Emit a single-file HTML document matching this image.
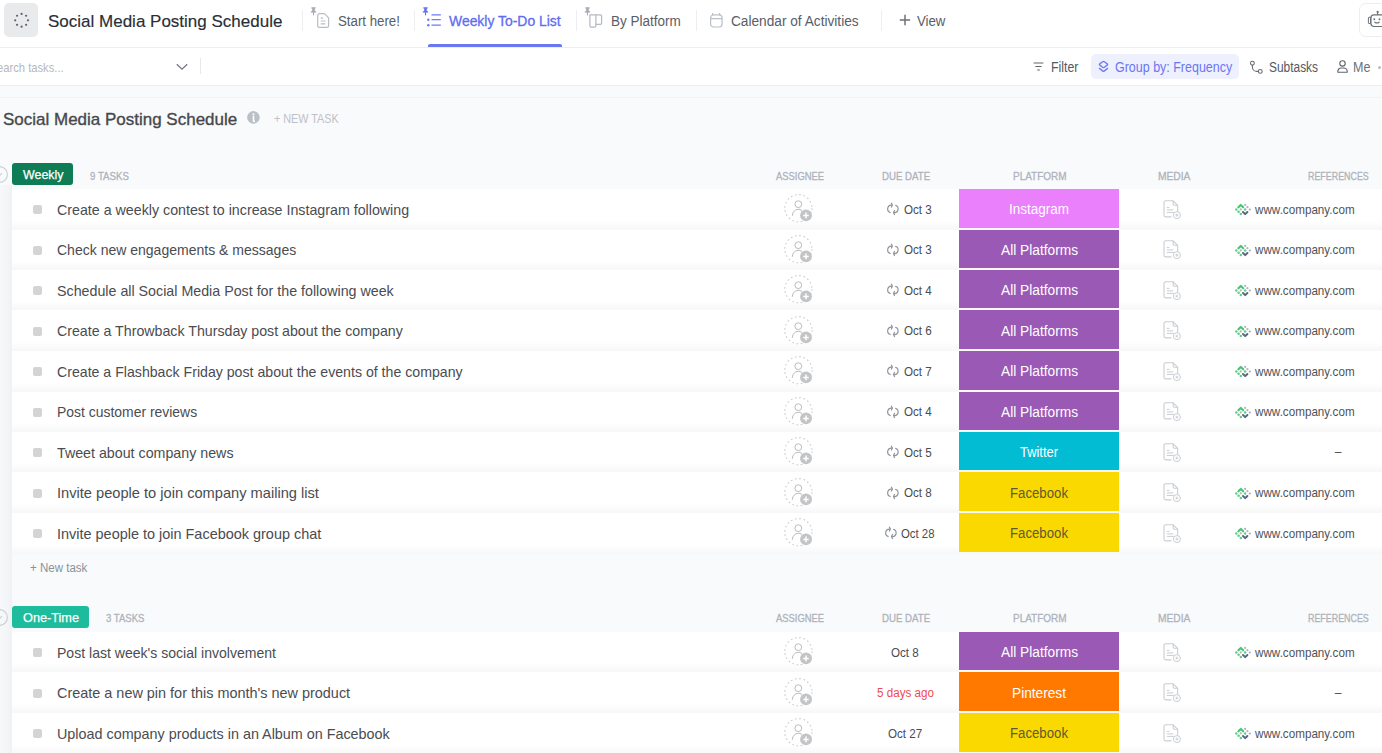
<!DOCTYPE html><html><head><meta charset="utf-8"><style>
*{margin:0;padding:0;box-sizing:border-box}
html,body{width:1382px;height:753px;overflow:hidden;background:#f9fafb;font-family:"Liberation Sans", sans-serif;position:relative}
.a{position:absolute}
.t{position:absolute;white-space:nowrap;line-height:1;font-family:"Liberation Sans", sans-serif}
svg{position:absolute;overflow:visible}
</style></head><body><div class="a" style="left:0;top:0;width:1382px;height:47px;background:#fff"></div>
<div class="a" style="left:0;top:47px;width:1382px;height:1px;background:#eceef1"></div>
<div class="a" style="left:4px;top:3px;width:34px;height:34px;border-radius:5px;background:#e9eaec"></div>
<svg class="a" style="left:0;top:0" width="40" height="40"><circle cx="21.60" cy="13.90" r="1.1" fill="#5f636a"/><circle cx="26.13" cy="15.77" r="1.1" fill="#5f636a"/><circle cx="28.00" cy="20.30" r="1.1" fill="#5f636a"/><circle cx="26.13" cy="24.83" r="1.1" fill="#5f636a"/><circle cx="21.60" cy="26.70" r="1.1" fill="#5f636a"/><circle cx="17.07" cy="24.83" r="1.1" fill="#5f636a"/><circle cx="15.20" cy="20.30" r="1.1" fill="#5f636a"/><circle cx="17.07" cy="15.77" r="1.1" fill="#5f636a"/></svg>
<div class="t" style="left:47.60px;top:13.00px;font-size:17px;color:#2a2e35;font-weight:normal;transform:scaleX(1.0002);transform-origin:0 0;-webkit-text-stroke:0.15px #2a2e35">Social Media Posting Schedule</div>
<div class="a" style="left:302px;top:10px;width:1px;height:21px;background:#eceef2"></div>
<div class="a" style="left:414px;top:10px;width:1px;height:21px;background:#eceef2"></div>
<div class="a" style="left:576px;top:10px;width:1px;height:21px;background:#eceef2"></div>
<div class="a" style="left:696px;top:10px;width:1px;height:21px;background:#eceef2"></div>
<div class="a" style="left:881px;top:10px;width:1px;height:21px;background:#eceef2"></div>
<div class="t" style="left:337.50px;top:14.00px;font-size:14px;color:#585d67;font-weight:normal;transform:scaleX(0.9470);transform-origin:0 0;">Start here!</div>
<div class="t" style="left:449.40px;top:14.00px;font-size:14px;color:#5f6cf0;font-weight:normal;transform:scaleX(0.9942);transform-origin:0 0;-webkit-text-stroke:0.3px #5f6cf0">Weekly To-Do List</div>
<div class="t" style="left:611.00px;top:14.00px;font-size:14px;color:#585d67;font-weight:normal;transform:scaleX(0.9647);transform-origin:0 0;">By Platform</div>
<div class="t" style="left:730.60px;top:14.00px;font-size:14px;color:#585d67;font-weight:normal;transform:scaleX(0.9764);transform-origin:0 0;">Calendar of Activities</div>
<div class="t" style="left:917.40px;top:14.00px;font-size:14px;color:#585d67;font-weight:normal;transform:scaleX(0.9438);transform-origin:0 0;">View</div>
<div class="a" style="left:428px;top:44px;width:134px;height:3px;border-radius:2px 2px 0 0;background:#6b76f3"></div>
<svg style="left:309.9px;top:7px" width="8" height="10" viewBox="0 0 8 10"><path d="M1.3 0.9h4.4" stroke="#a6abb3" stroke-width="1.1"/><path d="M2.4 0.9v2.7L0.9 5.2h5.2L4.6 3.6V0.9z" fill="#a6abb3" stroke="#a6abb3" stroke-width="0.6" stroke-linejoin="round"/><path d="M3.5 5v3.4" stroke="#a6abb3" stroke-width="1.1"/></svg>
<svg style="left:316.5px;top:13px" width="13" height="15" viewBox="0 0 13 15"><path d="M2.6 0.7h4.9l4.1 4.1v7.6a1.9 1.9 0 0 1-1.9 1.9H2.6A1.9 1.9 0 0 1 0.7 12.4V2.6A1.9 1.9 0 0 1 2.6 0.7z" stroke="#b9bec6" stroke-width="1.2" fill="none" stroke-linejoin="round"/><path d="M3.7 5.1h2.4M3.7 8h4.6M3.7 10.9h4.6" stroke="#b9bec6" stroke-width="1.1"/></svg>
<svg style="left:421.9px;top:7.3px" width="8" height="10" viewBox="0 0 8 10"><path d="M1.3 0.9h4.4" stroke="#6272f2" stroke-width="1.1"/><path d="M2.4 0.9v2.7L0.9 5.2h5.2L4.6 3.6V0.9z" fill="#6272f2" stroke="#6272f2" stroke-width="0.6" stroke-linejoin="round"/><path d="M3.5 5v3.4" stroke="#6272f2" stroke-width="1.1"/></svg>
<svg style="left:427px;top:13px" width="16" height="14" viewBox="0 0 16 14"><circle cx="1.3" cy="6.7" r="1.25" fill="#6b7cf5"/><circle cx="1.3" cy="12.2" r="1.25" fill="#6b7cf5"/><path d="M4.5 1.8h9.3M4.5 6.7h9.3M4.5 12.2h9.3" stroke="#6b7cf5" stroke-width="1.25"/></svg>
<svg style="left:584px;top:7px" width="8" height="10" viewBox="0 0 8 10"><path d="M1.3 0.9h4.4" stroke="#a6abb3" stroke-width="1.1"/><path d="M2.4 0.9v2.7L0.9 5.2h5.2L4.6 3.6V0.9z" fill="#a6abb3" stroke="#a6abb3" stroke-width="0.6" stroke-linejoin="round"/><path d="M3.5 5v3.4" stroke="#a6abb3" stroke-width="1.1"/></svg>
<svg style="left:589px;top:13.8px" width="14" height="15" viewBox="0 0 14 15"><path d="M0.9 0.9h6v10.9a1.4 1.4 0 0 1-1.4 1.4H2.3A1.4 1.4 0 0 1 0.9 11.8z" stroke="#b4b9c2" stroke-width="1.2" fill="none" stroke-linejoin="round"/><path d="M6.9 0.9h4.4a1.3 1.3 0 0 1 1.3 1.3v6.8a1.4 1.4 0 0 1-1.4 1.4H6.9" stroke="#b4b9c2" stroke-width="1.2" fill="none" stroke-linejoin="round"/></svg>
<svg style="left:709px;top:12px" width="15" height="16" viewBox="0 0 15 16"><rect x="1.6" y="2.9" width="11.5" height="12.1" rx="3" stroke="#bcc0c8" stroke-width="1.2" fill="none"/><path d="M1.6 6.7h11.5M3.6 0.9v2.4M10.6 0.9v2.4" stroke="#bcc0c8" stroke-width="1.2"/></svg>
<svg style="left:899px;top:14px" width="12" height="12" viewBox="0 0 12 12"><path d="M6 0.8v10.4M0.8 6h10.4" stroke="#6d7077" stroke-width="1.5"/></svg>
<div class="a" style="left:1359px;top:3px;width:40px;height:34px;border-radius:7px;border:1px solid #eceef1;background:#fff"></div>
<svg style="left:1367px;top:10px" width="20" height="18" viewBox="0 0 20 18"><rect x="3.9" y="4.9" width="14" height="11.6" rx="3" stroke="#6a6f78" stroke-width="1.2" fill="none"/><rect x="1.4" y="7.3" width="2.2" height="6.2" rx="0.6" stroke="#6a6f78" stroke-width="1" fill="none"/><path d="M10.6 2.2v2.7" stroke="#6a6f78" stroke-width="1.2"/><circle cx="10.6" cy="1.9" r="1.1" fill="#6a6f78"/><circle cx="7.3" cy="9.2" r="0.95" fill="#6a6f78"/><circle cx="12.5" cy="9.2" r="0.95" fill="#6a6f78"/><path d="M7.9 12.2q2.1 1.5 4.2 0" stroke="#6a6f78" stroke-width="1.2" fill="none" stroke-linecap="round"/></svg>
<div class="a" style="left:0;top:48px;width:1382px;height:37px;background:#fff"></div>
<div class="a" style="left:0;top:85px;width:1382px;height:1px;background:#eceef1"></div>
<div class="t" style="left:-2.60px;top:61.00px;font-size:13.5px;color:#b6b8bc;font-weight:normal;transform:scaleX(0.8296);transform-origin:0 0;">earch tasks...</div>
<svg style="left:176px;top:63px" width="12" height="8" viewBox="0 0 12 8"><path d="M0.8 1.2l5.2 5 5.2-5" stroke="#70757e" stroke-width="1.2" fill="none"/></svg>
<div class="a" style="left:200px;top:58px;width:1px;height:16px;background:#e6e8ec"></div>
<svg style="left:1033px;top:62px" width="11" height="9" viewBox="0 0 11 9"><path d="M0.6 1h9.8M2.4 4.5h6.2M4.2 8h2.6" stroke="#5f6470" stroke-width="1.2"/></svg>
<div class="t" style="left:1050.60px;top:60.00px;font-size:14px;color:#545963;font-weight:normal;transform:scaleX(0.8807);transform-origin:0 0;">Filter</div>
<div class="a" style="left:1091px;top:54px;width:148px;height:25px;border-radius:5px;background:#eef0fd"></div>
<svg style="left:1098px;top:60px" width="12" height="14" viewBox="0 0 12 14"><path d="M4.6 1.8Q5.5 1.1 6.4 1.8L9.2 3.9Q10 4.5 9.2 5.1L6.4 7.3Q5.5 8 4.6 7.3L1.8 5.1Q1 4.5 1.8 3.9z" stroke="#6f7ef5" stroke-width="1.35" fill="none" stroke-linejoin="round"/><path d="M1.4 8.4L4.6 10.9Q5.5 11.6 6.4 10.9L9.6 8.4" stroke="#6f7ef5" stroke-width="1.35" fill="none" stroke-linecap="round" stroke-linejoin="round"/></svg>
<div class="t" style="left:1114.80px;top:60.00px;font-size:14px;color:#6b76f3;font-weight:normal;transform:scaleX(0.8912);transform-origin:0 0;">Group by: Frequency</div>
<svg style="left:1250px;top:60px" width="14" height="14" viewBox="0 0 14 14"><circle cx="2.4" cy="3.2" r="1.9" stroke="#676b74" stroke-width="1.1" fill="none"/><circle cx="10.3" cy="11.4" r="1.9" stroke="#676b74" stroke-width="1.1" fill="none"/><path d="M2.4 5.1v1.8a4.5 4.5 0 0 0 4.5 4.5h1.5" stroke="#676b74" stroke-width="1.1" fill="none"/></svg>
<div class="t" style="left:1268.80px;top:60.00px;font-size:14px;color:#545963;font-weight:normal;transform:scaleX(0.8509);transform-origin:0 0;">Subtasks</div>
<svg style="left:1337px;top:60px" width="11" height="13" viewBox="0 0 11 13"><circle cx="5.5" cy="3.4" r="2.7" stroke="#5f6470" stroke-width="1.1" fill="none"/><path d="M0.8 12.2v-0.8a3.4 3.4 0 0 1 3.4-3.4h2.6a3.4 3.4 0 0 1 3.4 3.4v0.8z" stroke="#5f6470" stroke-width="1.1" fill="none" stroke-linejoin="round"/></svg>
<div class="t" style="left:1352.60px;top:60.00px;font-size:14px;color:#6c717b;font-weight:normal;transform:scaleX(0.8947);transform-origin:0 0;">Me</div>
<div class="a" style="left:1377.5px;top:65.5px;width:3px;height:3px;border-radius:50%;background:#b8bcc4"></div>
<div class="a" style="left:0;top:97px;width:1382px;height:1px;background:#f2f3f3"></div>
<div class="t" style="left:2.80px;top:111.00px;font-size:17px;color:#46484c;font-weight:normal;transform:scaleX(0.9993);transform-origin:0 0;-webkit-text-stroke:0.35px #46484c">Social Media Posting Schedule</div>
<svg style="left:247.4px;top:111.2px" width="13" height="13" viewBox="0 0 13 13"><circle cx="6.4" cy="6.4" r="6.3" fill="#bbc0c8"/><path d="M6.5 5.3v4.4q0 0.7 0.8 0.7" stroke="#fff" stroke-width="1.6" fill="none" stroke-linecap="round"/><circle cx="6.5" cy="3.3" r="1" fill="#fff"/></svg>
<div class="t" style="left:274.20px;top:113.00px;font-size:12px;color:#bcc1c9;font-weight:normal;transform:scaleX(0.8999);transform-origin:0 0;">+ NEW TASK</div>
<div class="a" style="left:0;top:185px;width:12px;height:568px;background:linear-gradient(90deg,#f7f8fa 0,#f4f5f7 60%,#f0f1f3 100%)"></div>
<svg style="left:-10px;top:165.8px" width="20" height="20" viewBox="0 0 20 20"><circle cx="9.5" cy="8.5" r="7.9" stroke="#c9cdd3" stroke-width="1.1" fill="none"/><path d="M6.5 8.8l2 2 3.6-3.6" stroke="#c9cdd3" stroke-width="1.1" fill="none"/></svg>
<div class="a" style="left:12px;top:163.3px;width:61px;height:21.5px;border-radius:3px;background:#0e7d56"></div>
<div class="t" style="left:22.70px;top:168.00px;font-size:13.5px;color:#fff;font-weight:normal;transform:scaleX(0.9202);transform-origin:0 0;-webkit-text-stroke:0.25px #fff">Weekly</div>
<div class="t" style="left:90.00px;top:171.00px;font-size:11px;color:#adb3bc;font-weight:normal;transform:scaleX(0.8779);transform-origin:0 0;-webkit-text-stroke:0.3px #adb3bc">9 TASKS</div>
<div class="t" style="left:775.60px;top:171.00px;font-size:11px;color:#adb3bc;font-weight:normal;transform:scaleX(0.8553);transform-origin:0 0;-webkit-text-stroke:0.3px #adb3bc">ASSIGNEE</div>
<div class="t" style="left:881.90px;top:171.00px;font-size:11px;color:#adb3bc;font-weight:normal;transform:scaleX(0.8777);transform-origin:0 0;-webkit-text-stroke:0.3px #adb3bc">DUE DATE</div>
<div class="t" style="left:1013.30px;top:171.00px;font-size:11px;color:#adb3bc;font-weight:normal;transform:scaleX(0.9073);transform-origin:0 0;-webkit-text-stroke:0.3px #adb3bc">PLATFORM</div>
<div class="t" style="left:1157.50px;top:171.00px;font-size:11px;color:#adb3bc;font-weight:normal;transform:scaleX(0.9300);transform-origin:0 0;-webkit-text-stroke:0.3px #adb3bc">MEDIA</div>
<div class="t" style="left:1308.20px;top:171.00px;font-size:11px;color:#adb3bc;font-weight:normal;transform:scaleX(0.8087);transform-origin:0 0;-webkit-text-stroke:0.3px #adb3bc">REFERENCES</div>
<div class="a" style="left:12px;top:189px;width:1370px;height:41px;background:linear-gradient(180deg,#fff 0,#fff 78%,#f7f7f7 100%)"></div>
<div class="a" style="left:33px;top:205.0px;width:9px;height:9px;border-radius:2px;background:#d4d4d5"></div>
<div class="t" style="left:57.00px;top:202.00px;font-size:15px;color:#4a4c50;font-weight:normal;transform:scaleX(0.9490);transform-origin:0 0;">Create a weekly contest to increase Instagram following</div>
<svg style="left:783px;top:194.0px" width="31" height="31" viewBox="0 0 31 31"><circle cx="15.4" cy="14.2" r="13.6" stroke="#c9cbcf" stroke-width="1.05" stroke-dasharray="1.7 2.6" fill="none"/><circle cx="15.3" cy="10.2" r="3.4" stroke="#b9bcc1" stroke-width="1" fill="none"/><path d="M9.3 21.8a6.2 6.2 0 0 1 9.8-5.4" stroke="#b9bcc1" stroke-width="1" fill="none"/><circle cx="23" cy="21.4" r="5.9" fill="#c3c4c6"/><path d="M23 18.6v5.6M20.2 21.4h5.6" stroke="#fff" stroke-width="1.5"/></svg>
<svg style="left:882.0px;top:199.0px" width="22" height="20" viewBox="0 0 22 20"><path d="M8.6 13.6A3.8 3.8 0 0 1 9.4 6.1H10.2" stroke="#8d9199" stroke-width="1.15" fill="none"/><path d="M9.2 3.7L10.4 6.1L9.2 8.6" stroke="#8d9199" stroke-width="1.15" fill="none" stroke-linejoin="round"/><path d="M13.2 6.2A3.75 3.75 0 0 1 12.6 13.6H11.7" stroke="#8d9199" stroke-width="1.15" fill="none"/><path d="M12.7 11.1L11.5 13.6L12.7 16.1" stroke="#8d9199" stroke-width="1.15" fill="none" stroke-linejoin="round"/></svg>
<div class="t" style="left:904.00px;top:204.00px;font-size:12.5px;color:#4a4c50;font-weight:normal;transform:scaleX(0.9300);transform-origin:0 0;">Oct 3</div>
<div class="a" style="left:959px;top:189px;width:160px;height:39px;background:#ea80fc"></div>
<div class="t" style="left:1009.40px;top:202.00px;font-size:14px;color:#fff;font-weight:normal;transform:scaleX(0.9639);transform-origin:0 0;">Instagram</div>
<svg style="left:1163.4px;top:199.5px" width="19" height="19" viewBox="0 0 19 19"><path d="M8.5 16.9H2.6A1.6 1.6 0 0 1 1 15.3V2.4A1.6 1.6 0 0 1 2.6 0.8h7.6l4.5 4.5v6.4" stroke="#c9cdd4" stroke-width="1.1" fill="none" stroke-linejoin="round"/><path d="M10.2 0.8v3.3a1.2 1.2 0 0 0 1.2 1.2h3.3" stroke="#c9cdd4" stroke-width="1.1" fill="none"/><path d="M3.8 7.4h2.6M3.8 9.9h6.6M3.8 12.4h7" stroke="#c9cdd4" stroke-width="1"/><circle cx="13.9" cy="15.1" r="3.5" stroke="#c9cdd4" stroke-width="1" fill="#fff"/><path d="M13.9 13.6v3M12.4 15.1h3" stroke="#c9cdd4" stroke-width="1"/></svg>
<svg style="left:1230px;top:198.0px" width="26" height="22" viewBox="0 0 26 22"><path d="M8.4 9.3L10.8 6.9L13.2 9.3" stroke="#45c56f" stroke-width="2.1" fill="none" stroke-linecap="round" stroke-linejoin="round"/><circle cx="6.3" cy="11.5" r="1.25" fill="#5fce85"/><circle cx="8.6" cy="13.7" r="1.25" fill="#5fce85"/><circle cx="10.8" cy="15.9" r="1.25" fill="#5fce85"/><circle cx="15.1" cy="11.5" r="1.25" fill="#5fce85"/><circle cx="15.2" cy="6.9" r="1.1" fill="#b0b6c4"/><circle cx="17.4" cy="9.2" r="1.1" fill="#b0b6c4"/><circle cx="19.8" cy="11.5" r="1.1" fill="#a3aab8"/><circle cx="10.8" cy="11.4" r="1.1" fill="#b0b6c4"/><path d="M13 14L15.2 16.1L17.4 14" stroke="#5a6580" stroke-width="2" fill="none" stroke-linecap="round" stroke-linejoin="round"/></svg>
<div class="t" style="left:1254.80px;top:204.00px;font-size:12.7px;color:#505257;font-weight:normal;transform:scaleX(0.9193);transform-origin:0 0;">www.company.com</div>
<div class="a" style="left:12px;top:230px;width:1370px;height:40px;background:linear-gradient(180deg,#fff 0,#fff 78%,#f7f7f7 100%)"></div>
<div class="a" style="left:33px;top:245.5px;width:9px;height:9px;border-radius:2px;background:#d4d4d5"></div>
<div class="t" style="left:57.00px;top:242.00px;font-size:15px;color:#4a4c50;font-weight:normal;transform:scaleX(0.9345);transform-origin:0 0;">Check new engagements &amp; messages</div>
<svg style="left:783px;top:234.5px" width="31" height="31" viewBox="0 0 31 31"><circle cx="15.4" cy="14.2" r="13.6" stroke="#c9cbcf" stroke-width="1.05" stroke-dasharray="1.7 2.6" fill="none"/><circle cx="15.3" cy="10.2" r="3.4" stroke="#b9bcc1" stroke-width="1" fill="none"/><path d="M9.3 21.8a6.2 6.2 0 0 1 9.8-5.4" stroke="#b9bcc1" stroke-width="1" fill="none"/><circle cx="23" cy="21.4" r="5.9" fill="#c3c4c6"/><path d="M23 18.6v5.6M20.2 21.4h5.6" stroke="#fff" stroke-width="1.5"/></svg>
<svg style="left:882.0px;top:239.5px" width="22" height="20" viewBox="0 0 22 20"><path d="M8.6 13.6A3.8 3.8 0 0 1 9.4 6.1H10.2" stroke="#8d9199" stroke-width="1.15" fill="none"/><path d="M9.2 3.7L10.4 6.1L9.2 8.6" stroke="#8d9199" stroke-width="1.15" fill="none" stroke-linejoin="round"/><path d="M13.2 6.2A3.75 3.75 0 0 1 12.6 13.6H11.7" stroke="#8d9199" stroke-width="1.15" fill="none"/><path d="M12.7 11.1L11.5 13.6L12.7 16.1" stroke="#8d9199" stroke-width="1.15" fill="none" stroke-linejoin="round"/></svg>
<div class="t" style="left:904.00px;top:244.00px;font-size:12.5px;color:#4a4c50;font-weight:normal;transform:scaleX(0.9300);transform-origin:0 0;">Oct 3</div>
<div class="a" style="left:959px;top:230px;width:160px;height:38px;background:#9b59b6"></div>
<div class="t" style="left:1000.90px;top:243.00px;font-size:14px;color:#fff;font-weight:normal;transform:scaleX(0.9800);transform-origin:0 0;">All Platforms</div>
<svg style="left:1163.4px;top:240.0px" width="19" height="19" viewBox="0 0 19 19"><path d="M8.5 16.9H2.6A1.6 1.6 0 0 1 1 15.3V2.4A1.6 1.6 0 0 1 2.6 0.8h7.6l4.5 4.5v6.4" stroke="#c9cdd4" stroke-width="1.1" fill="none" stroke-linejoin="round"/><path d="M10.2 0.8v3.3a1.2 1.2 0 0 0 1.2 1.2h3.3" stroke="#c9cdd4" stroke-width="1.1" fill="none"/><path d="M3.8 7.4h2.6M3.8 9.9h6.6M3.8 12.4h7" stroke="#c9cdd4" stroke-width="1"/><circle cx="13.9" cy="15.1" r="3.5" stroke="#c9cdd4" stroke-width="1" fill="#fff"/><path d="M13.9 13.6v3M12.4 15.1h3" stroke="#c9cdd4" stroke-width="1"/></svg>
<svg style="left:1230px;top:238.5px" width="26" height="22" viewBox="0 0 26 22"><path d="M8.4 9.3L10.8 6.9L13.2 9.3" stroke="#45c56f" stroke-width="2.1" fill="none" stroke-linecap="round" stroke-linejoin="round"/><circle cx="6.3" cy="11.5" r="1.25" fill="#5fce85"/><circle cx="8.6" cy="13.7" r="1.25" fill="#5fce85"/><circle cx="10.8" cy="15.9" r="1.25" fill="#5fce85"/><circle cx="15.1" cy="11.5" r="1.25" fill="#5fce85"/><circle cx="15.2" cy="6.9" r="1.1" fill="#b0b6c4"/><circle cx="17.4" cy="9.2" r="1.1" fill="#b0b6c4"/><circle cx="19.8" cy="11.5" r="1.1" fill="#a3aab8"/><circle cx="10.8" cy="11.4" r="1.1" fill="#b0b6c4"/><path d="M13 14L15.2 16.1L17.4 14" stroke="#5a6580" stroke-width="2" fill="none" stroke-linecap="round" stroke-linejoin="round"/></svg>
<div class="t" style="left:1254.80px;top:244.00px;font-size:12.7px;color:#505257;font-weight:normal;transform:scaleX(0.9193);transform-origin:0 0;">www.company.com</div>
<div class="a" style="left:12px;top:270px;width:1370px;height:40px;background:linear-gradient(180deg,#fff 0,#fff 78%,#f7f7f7 100%)"></div>
<div class="a" style="left:33px;top:286.0px;width:9px;height:9px;border-radius:2px;background:#d4d4d5"></div>
<div class="t" style="left:57.00px;top:283.00px;font-size:15px;color:#4a4c50;font-weight:normal;transform:scaleX(0.9502);transform-origin:0 0;">Schedule all Social Media Post for the following week</div>
<svg style="left:783px;top:275.0px" width="31" height="31" viewBox="0 0 31 31"><circle cx="15.4" cy="14.2" r="13.6" stroke="#c9cbcf" stroke-width="1.05" stroke-dasharray="1.7 2.6" fill="none"/><circle cx="15.3" cy="10.2" r="3.4" stroke="#b9bcc1" stroke-width="1" fill="none"/><path d="M9.3 21.8a6.2 6.2 0 0 1 9.8-5.4" stroke="#b9bcc1" stroke-width="1" fill="none"/><circle cx="23" cy="21.4" r="5.9" fill="#c3c4c6"/><path d="M23 18.6v5.6M20.2 21.4h5.6" stroke="#fff" stroke-width="1.5"/></svg>
<svg style="left:882.0px;top:280.0px" width="22" height="20" viewBox="0 0 22 20"><path d="M8.6 13.6A3.8 3.8 0 0 1 9.4 6.1H10.2" stroke="#8d9199" stroke-width="1.15" fill="none"/><path d="M9.2 3.7L10.4 6.1L9.2 8.6" stroke="#8d9199" stroke-width="1.15" fill="none" stroke-linejoin="round"/><path d="M13.2 6.2A3.75 3.75 0 0 1 12.6 13.6H11.7" stroke="#8d9199" stroke-width="1.15" fill="none"/><path d="M12.7 11.1L11.5 13.6L12.7 16.1" stroke="#8d9199" stroke-width="1.15" fill="none" stroke-linejoin="round"/></svg>
<div class="t" style="left:904.00px;top:285.00px;font-size:12.5px;color:#4a4c50;font-weight:normal;transform:scaleX(0.9300);transform-origin:0 0;">Oct 4</div>
<div class="a" style="left:959px;top:270px;width:160px;height:38px;background:#9b59b6"></div>
<div class="t" style="left:1000.90px;top:283.00px;font-size:14px;color:#fff;font-weight:normal;transform:scaleX(0.9800);transform-origin:0 0;">All Platforms</div>
<svg style="left:1163.4px;top:280.5px" width="19" height="19" viewBox="0 0 19 19"><path d="M8.5 16.9H2.6A1.6 1.6 0 0 1 1 15.3V2.4A1.6 1.6 0 0 1 2.6 0.8h7.6l4.5 4.5v6.4" stroke="#c9cdd4" stroke-width="1.1" fill="none" stroke-linejoin="round"/><path d="M10.2 0.8v3.3a1.2 1.2 0 0 0 1.2 1.2h3.3" stroke="#c9cdd4" stroke-width="1.1" fill="none"/><path d="M3.8 7.4h2.6M3.8 9.9h6.6M3.8 12.4h7" stroke="#c9cdd4" stroke-width="1"/><circle cx="13.9" cy="15.1" r="3.5" stroke="#c9cdd4" stroke-width="1" fill="#fff"/><path d="M13.9 13.6v3M12.4 15.1h3" stroke="#c9cdd4" stroke-width="1"/></svg>
<svg style="left:1230px;top:279.0px" width="26" height="22" viewBox="0 0 26 22"><path d="M8.4 9.3L10.8 6.9L13.2 9.3" stroke="#45c56f" stroke-width="2.1" fill="none" stroke-linecap="round" stroke-linejoin="round"/><circle cx="6.3" cy="11.5" r="1.25" fill="#5fce85"/><circle cx="8.6" cy="13.7" r="1.25" fill="#5fce85"/><circle cx="10.8" cy="15.9" r="1.25" fill="#5fce85"/><circle cx="15.1" cy="11.5" r="1.25" fill="#5fce85"/><circle cx="15.2" cy="6.9" r="1.1" fill="#b0b6c4"/><circle cx="17.4" cy="9.2" r="1.1" fill="#b0b6c4"/><circle cx="19.8" cy="11.5" r="1.1" fill="#a3aab8"/><circle cx="10.8" cy="11.4" r="1.1" fill="#b0b6c4"/><path d="M13 14L15.2 16.1L17.4 14" stroke="#5a6580" stroke-width="2" fill="none" stroke-linecap="round" stroke-linejoin="round"/></svg>
<div class="t" style="left:1254.80px;top:285.00px;font-size:12.7px;color:#505257;font-weight:normal;transform:scaleX(0.9193);transform-origin:0 0;">www.company.com</div>
<div class="a" style="left:12px;top:310px;width:1370px;height:41px;background:linear-gradient(180deg,#fff 0,#fff 78%,#f7f7f7 100%)"></div>
<div class="a" style="left:33px;top:326.5px;width:9px;height:9px;border-radius:2px;background:#d4d4d5"></div>
<div class="t" style="left:57.00px;top:323.00px;font-size:15px;color:#4a4c50;font-weight:normal;transform:scaleX(0.9461);transform-origin:0 0;">Create a Throwback Thursday post about the company</div>
<svg style="left:783px;top:315.5px" width="31" height="31" viewBox="0 0 31 31"><circle cx="15.4" cy="14.2" r="13.6" stroke="#c9cbcf" stroke-width="1.05" stroke-dasharray="1.7 2.6" fill="none"/><circle cx="15.3" cy="10.2" r="3.4" stroke="#b9bcc1" stroke-width="1" fill="none"/><path d="M9.3 21.8a6.2 6.2 0 0 1 9.8-5.4" stroke="#b9bcc1" stroke-width="1" fill="none"/><circle cx="23" cy="21.4" r="5.9" fill="#c3c4c6"/><path d="M23 18.6v5.6M20.2 21.4h5.6" stroke="#fff" stroke-width="1.5"/></svg>
<svg style="left:882.0px;top:320.5px" width="22" height="20" viewBox="0 0 22 20"><path d="M8.6 13.6A3.8 3.8 0 0 1 9.4 6.1H10.2" stroke="#8d9199" stroke-width="1.15" fill="none"/><path d="M9.2 3.7L10.4 6.1L9.2 8.6" stroke="#8d9199" stroke-width="1.15" fill="none" stroke-linejoin="round"/><path d="M13.2 6.2A3.75 3.75 0 0 1 12.6 13.6H11.7" stroke="#8d9199" stroke-width="1.15" fill="none"/><path d="M12.7 11.1L11.5 13.6L12.7 16.1" stroke="#8d9199" stroke-width="1.15" fill="none" stroke-linejoin="round"/></svg>
<div class="t" style="left:904.00px;top:325.00px;font-size:12.5px;color:#4a4c50;font-weight:normal;transform:scaleX(0.9300);transform-origin:0 0;">Oct 6</div>
<div class="a" style="left:959px;top:310px;width:160px;height:39px;background:#9b59b6"></div>
<div class="t" style="left:1000.90px;top:324.00px;font-size:14px;color:#fff;font-weight:normal;transform:scaleX(0.9800);transform-origin:0 0;">All Platforms</div>
<svg style="left:1163.4px;top:321.0px" width="19" height="19" viewBox="0 0 19 19"><path d="M8.5 16.9H2.6A1.6 1.6 0 0 1 1 15.3V2.4A1.6 1.6 0 0 1 2.6 0.8h7.6l4.5 4.5v6.4" stroke="#c9cdd4" stroke-width="1.1" fill="none" stroke-linejoin="round"/><path d="M10.2 0.8v3.3a1.2 1.2 0 0 0 1.2 1.2h3.3" stroke="#c9cdd4" stroke-width="1.1" fill="none"/><path d="M3.8 7.4h2.6M3.8 9.9h6.6M3.8 12.4h7" stroke="#c9cdd4" stroke-width="1"/><circle cx="13.9" cy="15.1" r="3.5" stroke="#c9cdd4" stroke-width="1" fill="#fff"/><path d="M13.9 13.6v3M12.4 15.1h3" stroke="#c9cdd4" stroke-width="1"/></svg>
<svg style="left:1230px;top:319.5px" width="26" height="22" viewBox="0 0 26 22"><path d="M8.4 9.3L10.8 6.9L13.2 9.3" stroke="#45c56f" stroke-width="2.1" fill="none" stroke-linecap="round" stroke-linejoin="round"/><circle cx="6.3" cy="11.5" r="1.25" fill="#5fce85"/><circle cx="8.6" cy="13.7" r="1.25" fill="#5fce85"/><circle cx="10.8" cy="15.9" r="1.25" fill="#5fce85"/><circle cx="15.1" cy="11.5" r="1.25" fill="#5fce85"/><circle cx="15.2" cy="6.9" r="1.1" fill="#b0b6c4"/><circle cx="17.4" cy="9.2" r="1.1" fill="#b0b6c4"/><circle cx="19.8" cy="11.5" r="1.1" fill="#a3aab8"/><circle cx="10.8" cy="11.4" r="1.1" fill="#b0b6c4"/><path d="M13 14L15.2 16.1L17.4 14" stroke="#5a6580" stroke-width="2" fill="none" stroke-linecap="round" stroke-linejoin="round"/></svg>
<div class="t" style="left:1254.80px;top:325.00px;font-size:12.7px;color:#505257;font-weight:normal;transform:scaleX(0.9193);transform-origin:0 0;">www.company.com</div>
<div class="a" style="left:12px;top:351px;width:1370px;height:41px;background:linear-gradient(180deg,#fff 0,#fff 78%,#f7f7f7 100%)"></div>
<div class="a" style="left:33px;top:367.0px;width:9px;height:9px;border-radius:2px;background:#d4d4d5"></div>
<div class="t" style="left:57.00px;top:364.00px;font-size:15px;color:#4a4c50;font-weight:normal;transform:scaleX(0.9427);transform-origin:0 0;">Create a Flashback Friday post about the events of the company</div>
<svg style="left:783px;top:356.0px" width="31" height="31" viewBox="0 0 31 31"><circle cx="15.4" cy="14.2" r="13.6" stroke="#c9cbcf" stroke-width="1.05" stroke-dasharray="1.7 2.6" fill="none"/><circle cx="15.3" cy="10.2" r="3.4" stroke="#b9bcc1" stroke-width="1" fill="none"/><path d="M9.3 21.8a6.2 6.2 0 0 1 9.8-5.4" stroke="#b9bcc1" stroke-width="1" fill="none"/><circle cx="23" cy="21.4" r="5.9" fill="#c3c4c6"/><path d="M23 18.6v5.6M20.2 21.4h5.6" stroke="#fff" stroke-width="1.5"/></svg>
<svg style="left:882.0px;top:361.0px" width="22" height="20" viewBox="0 0 22 20"><path d="M8.6 13.6A3.8 3.8 0 0 1 9.4 6.1H10.2" stroke="#8d9199" stroke-width="1.15" fill="none"/><path d="M9.2 3.7L10.4 6.1L9.2 8.6" stroke="#8d9199" stroke-width="1.15" fill="none" stroke-linejoin="round"/><path d="M13.2 6.2A3.75 3.75 0 0 1 12.6 13.6H11.7" stroke="#8d9199" stroke-width="1.15" fill="none"/><path d="M12.7 11.1L11.5 13.6L12.7 16.1" stroke="#8d9199" stroke-width="1.15" fill="none" stroke-linejoin="round"/></svg>
<div class="t" style="left:904.00px;top:366.00px;font-size:12.5px;color:#4a4c50;font-weight:normal;transform:scaleX(0.9300);transform-origin:0 0;">Oct 7</div>
<div class="a" style="left:959px;top:351px;width:160px;height:39px;background:#9b59b6"></div>
<div class="t" style="left:1000.90px;top:364.00px;font-size:14px;color:#fff;font-weight:normal;transform:scaleX(0.9800);transform-origin:0 0;">All Platforms</div>
<svg style="left:1163.4px;top:361.5px" width="19" height="19" viewBox="0 0 19 19"><path d="M8.5 16.9H2.6A1.6 1.6 0 0 1 1 15.3V2.4A1.6 1.6 0 0 1 2.6 0.8h7.6l4.5 4.5v6.4" stroke="#c9cdd4" stroke-width="1.1" fill="none" stroke-linejoin="round"/><path d="M10.2 0.8v3.3a1.2 1.2 0 0 0 1.2 1.2h3.3" stroke="#c9cdd4" stroke-width="1.1" fill="none"/><path d="M3.8 7.4h2.6M3.8 9.9h6.6M3.8 12.4h7" stroke="#c9cdd4" stroke-width="1"/><circle cx="13.9" cy="15.1" r="3.5" stroke="#c9cdd4" stroke-width="1" fill="#fff"/><path d="M13.9 13.6v3M12.4 15.1h3" stroke="#c9cdd4" stroke-width="1"/></svg>
<svg style="left:1230px;top:360.0px" width="26" height="22" viewBox="0 0 26 22"><path d="M8.4 9.3L10.8 6.9L13.2 9.3" stroke="#45c56f" stroke-width="2.1" fill="none" stroke-linecap="round" stroke-linejoin="round"/><circle cx="6.3" cy="11.5" r="1.25" fill="#5fce85"/><circle cx="8.6" cy="13.7" r="1.25" fill="#5fce85"/><circle cx="10.8" cy="15.9" r="1.25" fill="#5fce85"/><circle cx="15.1" cy="11.5" r="1.25" fill="#5fce85"/><circle cx="15.2" cy="6.9" r="1.1" fill="#b0b6c4"/><circle cx="17.4" cy="9.2" r="1.1" fill="#b0b6c4"/><circle cx="19.8" cy="11.5" r="1.1" fill="#a3aab8"/><circle cx="10.8" cy="11.4" r="1.1" fill="#b0b6c4"/><path d="M13 14L15.2 16.1L17.4 14" stroke="#5a6580" stroke-width="2" fill="none" stroke-linecap="round" stroke-linejoin="round"/></svg>
<div class="t" style="left:1254.80px;top:366.00px;font-size:12.7px;color:#505257;font-weight:normal;transform:scaleX(0.9193);transform-origin:0 0;">www.company.com</div>
<div class="a" style="left:12px;top:392px;width:1370px;height:40px;background:linear-gradient(180deg,#fff 0,#fff 78%,#f7f7f7 100%)"></div>
<div class="a" style="left:33px;top:407.5px;width:9px;height:9px;border-radius:2px;background:#d4d4d5"></div>
<div class="t" style="left:57.00px;top:404.00px;font-size:15px;color:#4a4c50;font-weight:normal;transform:scaleX(0.9286);transform-origin:0 0;">Post customer reviews</div>
<svg style="left:783px;top:396.5px" width="31" height="31" viewBox="0 0 31 31"><circle cx="15.4" cy="14.2" r="13.6" stroke="#c9cbcf" stroke-width="1.05" stroke-dasharray="1.7 2.6" fill="none"/><circle cx="15.3" cy="10.2" r="3.4" stroke="#b9bcc1" stroke-width="1" fill="none"/><path d="M9.3 21.8a6.2 6.2 0 0 1 9.8-5.4" stroke="#b9bcc1" stroke-width="1" fill="none"/><circle cx="23" cy="21.4" r="5.9" fill="#c3c4c6"/><path d="M23 18.6v5.6M20.2 21.4h5.6" stroke="#fff" stroke-width="1.5"/></svg>
<svg style="left:882.0px;top:401.5px" width="22" height="20" viewBox="0 0 22 20"><path d="M8.6 13.6A3.8 3.8 0 0 1 9.4 6.1H10.2" stroke="#8d9199" stroke-width="1.15" fill="none"/><path d="M9.2 3.7L10.4 6.1L9.2 8.6" stroke="#8d9199" stroke-width="1.15" fill="none" stroke-linejoin="round"/><path d="M13.2 6.2A3.75 3.75 0 0 1 12.6 13.6H11.7" stroke="#8d9199" stroke-width="1.15" fill="none"/><path d="M12.7 11.1L11.5 13.6L12.7 16.1" stroke="#8d9199" stroke-width="1.15" fill="none" stroke-linejoin="round"/></svg>
<div class="t" style="left:904.00px;top:406.00px;font-size:12.5px;color:#4a4c50;font-weight:normal;transform:scaleX(0.9300);transform-origin:0 0;">Oct 4</div>
<div class="a" style="left:959px;top:392px;width:160px;height:38px;background:#9b59b6"></div>
<div class="t" style="left:1000.90px;top:405.00px;font-size:14px;color:#fff;font-weight:normal;transform:scaleX(0.9800);transform-origin:0 0;">All Platforms</div>
<svg style="left:1163.4px;top:402.0px" width="19" height="19" viewBox="0 0 19 19"><path d="M8.5 16.9H2.6A1.6 1.6 0 0 1 1 15.3V2.4A1.6 1.6 0 0 1 2.6 0.8h7.6l4.5 4.5v6.4" stroke="#c9cdd4" stroke-width="1.1" fill="none" stroke-linejoin="round"/><path d="M10.2 0.8v3.3a1.2 1.2 0 0 0 1.2 1.2h3.3" stroke="#c9cdd4" stroke-width="1.1" fill="none"/><path d="M3.8 7.4h2.6M3.8 9.9h6.6M3.8 12.4h7" stroke="#c9cdd4" stroke-width="1"/><circle cx="13.9" cy="15.1" r="3.5" stroke="#c9cdd4" stroke-width="1" fill="#fff"/><path d="M13.9 13.6v3M12.4 15.1h3" stroke="#c9cdd4" stroke-width="1"/></svg>
<svg style="left:1230px;top:400.5px" width="26" height="22" viewBox="0 0 26 22"><path d="M8.4 9.3L10.8 6.9L13.2 9.3" stroke="#45c56f" stroke-width="2.1" fill="none" stroke-linecap="round" stroke-linejoin="round"/><circle cx="6.3" cy="11.5" r="1.25" fill="#5fce85"/><circle cx="8.6" cy="13.7" r="1.25" fill="#5fce85"/><circle cx="10.8" cy="15.9" r="1.25" fill="#5fce85"/><circle cx="15.1" cy="11.5" r="1.25" fill="#5fce85"/><circle cx="15.2" cy="6.9" r="1.1" fill="#b0b6c4"/><circle cx="17.4" cy="9.2" r="1.1" fill="#b0b6c4"/><circle cx="19.8" cy="11.5" r="1.1" fill="#a3aab8"/><circle cx="10.8" cy="11.4" r="1.1" fill="#b0b6c4"/><path d="M13 14L15.2 16.1L17.4 14" stroke="#5a6580" stroke-width="2" fill="none" stroke-linecap="round" stroke-linejoin="round"/></svg>
<div class="t" style="left:1254.80px;top:406.00px;font-size:12.7px;color:#505257;font-weight:normal;transform:scaleX(0.9193);transform-origin:0 0;">www.company.com</div>
<div class="a" style="left:12px;top:432px;width:1370px;height:40px;background:linear-gradient(180deg,#fff 0,#fff 78%,#f7f7f7 100%)"></div>
<div class="a" style="left:33px;top:448.0px;width:9px;height:9px;border-radius:2px;background:#d4d4d5"></div>
<div class="t" style="left:57.00px;top:445.00px;font-size:15px;color:#4a4c50;font-weight:normal;transform:scaleX(0.9492);transform-origin:0 0;">Tweet about company news</div>
<svg style="left:783px;top:437.0px" width="31" height="31" viewBox="0 0 31 31"><circle cx="15.4" cy="14.2" r="13.6" stroke="#c9cbcf" stroke-width="1.05" stroke-dasharray="1.7 2.6" fill="none"/><circle cx="15.3" cy="10.2" r="3.4" stroke="#b9bcc1" stroke-width="1" fill="none"/><path d="M9.3 21.8a6.2 6.2 0 0 1 9.8-5.4" stroke="#b9bcc1" stroke-width="1" fill="none"/><circle cx="23" cy="21.4" r="5.9" fill="#c3c4c6"/><path d="M23 18.6v5.6M20.2 21.4h5.6" stroke="#fff" stroke-width="1.5"/></svg>
<svg style="left:882.0px;top:442.0px" width="22" height="20" viewBox="0 0 22 20"><path d="M8.6 13.6A3.8 3.8 0 0 1 9.4 6.1H10.2" stroke="#8d9199" stroke-width="1.15" fill="none"/><path d="M9.2 3.7L10.4 6.1L9.2 8.6" stroke="#8d9199" stroke-width="1.15" fill="none" stroke-linejoin="round"/><path d="M13.2 6.2A3.75 3.75 0 0 1 12.6 13.6H11.7" stroke="#8d9199" stroke-width="1.15" fill="none"/><path d="M12.7 11.1L11.5 13.6L12.7 16.1" stroke="#8d9199" stroke-width="1.15" fill="none" stroke-linejoin="round"/></svg>
<div class="t" style="left:904.00px;top:447.00px;font-size:12.5px;color:#4a4c50;font-weight:normal;transform:scaleX(0.9300);transform-origin:0 0;">Oct 5</div>
<div class="a" style="left:959px;top:432px;width:160px;height:38px;background:#02bcd4"></div>
<div class="t" style="left:1020.40px;top:445.00px;font-size:14px;color:#fff;font-weight:normal;transform:scaleX(0.9217);transform-origin:0 0;">Twitter</div>
<svg style="left:1163.4px;top:442.5px" width="19" height="19" viewBox="0 0 19 19"><path d="M8.5 16.9H2.6A1.6 1.6 0 0 1 1 15.3V2.4A1.6 1.6 0 0 1 2.6 0.8h7.6l4.5 4.5v6.4" stroke="#c9cdd4" stroke-width="1.1" fill="none" stroke-linejoin="round"/><path d="M10.2 0.8v3.3a1.2 1.2 0 0 0 1.2 1.2h3.3" stroke="#c9cdd4" stroke-width="1.1" fill="none"/><path d="M3.8 7.4h2.6M3.8 9.9h6.6M3.8 12.4h7" stroke="#c9cdd4" stroke-width="1"/><circle cx="13.9" cy="15.1" r="3.5" stroke="#c9cdd4" stroke-width="1" fill="#fff"/><path d="M13.9 13.6v3M12.4 15.1h3" stroke="#c9cdd4" stroke-width="1"/></svg>
<div class="t" style="left:1334.66px;top:446.00px;font-size:12px;color:#4a4c50;font-weight:normal;transform:scaleX(1.0000);transform-origin:0 0;">–</div>
<div class="a" style="left:12px;top:472px;width:1370px;height:41px;background:linear-gradient(180deg,#fff 0,#fff 78%,#f7f7f7 100%)"></div>
<div class="a" style="left:33px;top:488.5px;width:9px;height:9px;border-radius:2px;background:#d4d4d5"></div>
<div class="t" style="left:57.00px;top:485.00px;font-size:15px;color:#4a4c50;font-weight:normal;transform:scaleX(0.9755);transform-origin:0 0;">Invite people to join company mailing list</div>
<svg style="left:783px;top:477.5px" width="31" height="31" viewBox="0 0 31 31"><circle cx="15.4" cy="14.2" r="13.6" stroke="#c9cbcf" stroke-width="1.05" stroke-dasharray="1.7 2.6" fill="none"/><circle cx="15.3" cy="10.2" r="3.4" stroke="#b9bcc1" stroke-width="1" fill="none"/><path d="M9.3 21.8a6.2 6.2 0 0 1 9.8-5.4" stroke="#b9bcc1" stroke-width="1" fill="none"/><circle cx="23" cy="21.4" r="5.9" fill="#c3c4c6"/><path d="M23 18.6v5.6M20.2 21.4h5.6" stroke="#fff" stroke-width="1.5"/></svg>
<svg style="left:882.0px;top:482.5px" width="22" height="20" viewBox="0 0 22 20"><path d="M8.6 13.6A3.8 3.8 0 0 1 9.4 6.1H10.2" stroke="#8d9199" stroke-width="1.15" fill="none"/><path d="M9.2 3.7L10.4 6.1L9.2 8.6" stroke="#8d9199" stroke-width="1.15" fill="none" stroke-linejoin="round"/><path d="M13.2 6.2A3.75 3.75 0 0 1 12.6 13.6H11.7" stroke="#8d9199" stroke-width="1.15" fill="none"/><path d="M12.7 11.1L11.5 13.6L12.7 16.1" stroke="#8d9199" stroke-width="1.15" fill="none" stroke-linejoin="round"/></svg>
<div class="t" style="left:904.00px;top:487.00px;font-size:12.5px;color:#4a4c50;font-weight:normal;transform:scaleX(0.9300);transform-origin:0 0;">Oct 8</div>
<div class="a" style="left:959px;top:472px;width:160px;height:39px;background:#f9d900"></div>
<div class="t" style="left:1010.40px;top:486.00px;font-size:14px;color:#5e5930;font-weight:normal;transform:scaleX(0.9434);transform-origin:0 0;">Facebook</div>
<svg style="left:1163.4px;top:483.0px" width="19" height="19" viewBox="0 0 19 19"><path d="M8.5 16.9H2.6A1.6 1.6 0 0 1 1 15.3V2.4A1.6 1.6 0 0 1 2.6 0.8h7.6l4.5 4.5v6.4" stroke="#c9cdd4" stroke-width="1.1" fill="none" stroke-linejoin="round"/><path d="M10.2 0.8v3.3a1.2 1.2 0 0 0 1.2 1.2h3.3" stroke="#c9cdd4" stroke-width="1.1" fill="none"/><path d="M3.8 7.4h2.6M3.8 9.9h6.6M3.8 12.4h7" stroke="#c9cdd4" stroke-width="1"/><circle cx="13.9" cy="15.1" r="3.5" stroke="#c9cdd4" stroke-width="1" fill="#fff"/><path d="M13.9 13.6v3M12.4 15.1h3" stroke="#c9cdd4" stroke-width="1"/></svg>
<svg style="left:1230px;top:481.5px" width="26" height="22" viewBox="0 0 26 22"><path d="M8.4 9.3L10.8 6.9L13.2 9.3" stroke="#45c56f" stroke-width="2.1" fill="none" stroke-linecap="round" stroke-linejoin="round"/><circle cx="6.3" cy="11.5" r="1.25" fill="#5fce85"/><circle cx="8.6" cy="13.7" r="1.25" fill="#5fce85"/><circle cx="10.8" cy="15.9" r="1.25" fill="#5fce85"/><circle cx="15.1" cy="11.5" r="1.25" fill="#5fce85"/><circle cx="15.2" cy="6.9" r="1.1" fill="#b0b6c4"/><circle cx="17.4" cy="9.2" r="1.1" fill="#b0b6c4"/><circle cx="19.8" cy="11.5" r="1.1" fill="#a3aab8"/><circle cx="10.8" cy="11.4" r="1.1" fill="#b0b6c4"/><path d="M13 14L15.2 16.1L17.4 14" stroke="#5a6580" stroke-width="2" fill="none" stroke-linecap="round" stroke-linejoin="round"/></svg>
<div class="t" style="left:1254.80px;top:487.00px;font-size:12.7px;color:#505257;font-weight:normal;transform:scaleX(0.9193);transform-origin:0 0;">www.company.com</div>
<div class="a" style="left:12px;top:513px;width:1370px;height:41px;background:linear-gradient(180deg,#fff 0,#fff 78%,#f7f7f7 100%)"></div>
<div class="a" style="left:33px;top:529.0px;width:9px;height:9px;border-radius:2px;background:#d4d4d5"></div>
<div class="t" style="left:57.00px;top:526.00px;font-size:15px;color:#4a4c50;font-weight:normal;transform:scaleX(0.9634);transform-origin:0 0;">Invite people to join Facebook group chat</div>
<svg style="left:783px;top:518.0px" width="31" height="31" viewBox="0 0 31 31"><circle cx="15.4" cy="14.2" r="13.6" stroke="#c9cbcf" stroke-width="1.05" stroke-dasharray="1.7 2.6" fill="none"/><circle cx="15.3" cy="10.2" r="3.4" stroke="#b9bcc1" stroke-width="1" fill="none"/><path d="M9.3 21.8a6.2 6.2 0 0 1 9.8-5.4" stroke="#b9bcc1" stroke-width="1" fill="none"/><circle cx="23" cy="21.4" r="5.9" fill="#c3c4c6"/><path d="M23 18.6v5.6M20.2 21.4h5.6" stroke="#fff" stroke-width="1.5"/></svg>
<svg style="left:879.6px;top:523.0px" width="22" height="20" viewBox="0 0 22 20"><path d="M8.6 13.6A3.8 3.8 0 0 1 9.4 6.1H10.2" stroke="#8d9199" stroke-width="1.15" fill="none"/><path d="M9.2 3.7L10.4 6.1L9.2 8.6" stroke="#8d9199" stroke-width="1.15" fill="none" stroke-linejoin="round"/><path d="M13.2 6.2A3.75 3.75 0 0 1 12.6 13.6H11.7" stroke="#8d9199" stroke-width="1.15" fill="none"/><path d="M12.7 11.1L11.5 13.6L12.7 16.1" stroke="#8d9199" stroke-width="1.15" fill="none" stroke-linejoin="round"/></svg>
<div class="t" style="left:901.00px;top:528.00px;font-size:12.5px;color:#4a4c50;font-weight:normal;transform:scaleX(0.9098);transform-origin:0 0;">Oct 28</div>
<div class="a" style="left:959px;top:513px;width:160px;height:39px;background:#f9d900"></div>
<div class="t" style="left:1010.40px;top:526.00px;font-size:14px;color:#5e5930;font-weight:normal;transform:scaleX(0.9434);transform-origin:0 0;">Facebook</div>
<svg style="left:1163.4px;top:523.5px" width="19" height="19" viewBox="0 0 19 19"><path d="M8.5 16.9H2.6A1.6 1.6 0 0 1 1 15.3V2.4A1.6 1.6 0 0 1 2.6 0.8h7.6l4.5 4.5v6.4" stroke="#c9cdd4" stroke-width="1.1" fill="none" stroke-linejoin="round"/><path d="M10.2 0.8v3.3a1.2 1.2 0 0 0 1.2 1.2h3.3" stroke="#c9cdd4" stroke-width="1.1" fill="none"/><path d="M3.8 7.4h2.6M3.8 9.9h6.6M3.8 12.4h7" stroke="#c9cdd4" stroke-width="1"/><circle cx="13.9" cy="15.1" r="3.5" stroke="#c9cdd4" stroke-width="1" fill="#fff"/><path d="M13.9 13.6v3M12.4 15.1h3" stroke="#c9cdd4" stroke-width="1"/></svg>
<svg style="left:1230px;top:522.0px" width="26" height="22" viewBox="0 0 26 22"><path d="M8.4 9.3L10.8 6.9L13.2 9.3" stroke="#45c56f" stroke-width="2.1" fill="none" stroke-linecap="round" stroke-linejoin="round"/><circle cx="6.3" cy="11.5" r="1.25" fill="#5fce85"/><circle cx="8.6" cy="13.7" r="1.25" fill="#5fce85"/><circle cx="10.8" cy="15.9" r="1.25" fill="#5fce85"/><circle cx="15.1" cy="11.5" r="1.25" fill="#5fce85"/><circle cx="15.2" cy="6.9" r="1.1" fill="#b0b6c4"/><circle cx="17.4" cy="9.2" r="1.1" fill="#b0b6c4"/><circle cx="19.8" cy="11.5" r="1.1" fill="#a3aab8"/><circle cx="10.8" cy="11.4" r="1.1" fill="#b0b6c4"/><path d="M13 14L15.2 16.1L17.4 14" stroke="#5a6580" stroke-width="2" fill="none" stroke-linecap="round" stroke-linejoin="round"/></svg>
<div class="t" style="left:1254.80px;top:528.00px;font-size:12.7px;color:#505257;font-weight:normal;transform:scaleX(0.9193);transform-origin:0 0;">www.company.com</div>
<div class="t" style="left:30.30px;top:562.00px;font-size:12.5px;color:#8c919a;font-weight:normal;transform:scaleX(0.9216);transform-origin:0 0;">+ New task</div>
<svg style="left:-10px;top:608.9px" width="20" height="20" viewBox="0 0 20 20"><circle cx="9.5" cy="8.5" r="7.9" stroke="#c9cdd3" stroke-width="1.1" fill="none"/><path d="M6.5 8.8l2 2 3.6-3.6" stroke="#c9cdd3" stroke-width="1.1" fill="none"/></svg>
<div class="a" style="left:12px;top:606.4px;width:77.4px;height:21.5px;border-radius:3px;background:#1dbc9c"></div>
<div class="t" style="left:22.60px;top:611.00px;font-size:13.5px;color:#fff;font-weight:normal;transform:scaleX(0.9410);transform-origin:0 0;-webkit-text-stroke:0.25px #fff">One-Time</div>
<div class="t" style="left:105.80px;top:613.00px;font-size:11px;color:#adb3bc;font-weight:normal;transform:scaleX(0.8689);transform-origin:0 0;-webkit-text-stroke:0.3px #adb3bc">3 TASKS</div>
<div class="t" style="left:775.60px;top:613.00px;font-size:11px;color:#adb3bc;font-weight:normal;transform:scaleX(0.8553);transform-origin:0 0;-webkit-text-stroke:0.3px #adb3bc">ASSIGNEE</div>
<div class="t" style="left:881.90px;top:613.00px;font-size:11px;color:#adb3bc;font-weight:normal;transform:scaleX(0.8777);transform-origin:0 0;-webkit-text-stroke:0.3px #adb3bc">DUE DATE</div>
<div class="t" style="left:1013.30px;top:613.00px;font-size:11px;color:#adb3bc;font-weight:normal;transform:scaleX(0.9073);transform-origin:0 0;-webkit-text-stroke:0.3px #adb3bc">PLATFORM</div>
<div class="t" style="left:1157.50px;top:613.00px;font-size:11px;color:#adb3bc;font-weight:normal;transform:scaleX(0.9300);transform-origin:0 0;-webkit-text-stroke:0.3px #adb3bc">MEDIA</div>
<div class="t" style="left:1308.20px;top:613.00px;font-size:11px;color:#adb3bc;font-weight:normal;transform:scaleX(0.8087);transform-origin:0 0;-webkit-text-stroke:0.3px #adb3bc">REFERENCES</div>
<div class="a" style="left:12px;top:632px;width:1370px;height:40px;background:linear-gradient(180deg,#fff 0,#fff 78%,#f7f7f7 100%)"></div>
<div class="a" style="left:33px;top:648.0px;width:9px;height:9px;border-radius:2px;background:#d4d4d5"></div>
<div class="t" style="left:57.00px;top:645.00px;font-size:15px;color:#4a4c50;font-weight:normal;transform:scaleX(0.9367);transform-origin:0 0;">Post last week's social involvement</div>
<svg style="left:783px;top:637.0px" width="31" height="31" viewBox="0 0 31 31"><circle cx="15.4" cy="14.2" r="13.6" stroke="#c9cbcf" stroke-width="1.05" stroke-dasharray="1.7 2.6" fill="none"/><circle cx="15.3" cy="10.2" r="3.4" stroke="#b9bcc1" stroke-width="1" fill="none"/><path d="M9.3 21.8a6.2 6.2 0 0 1 9.8-5.4" stroke="#b9bcc1" stroke-width="1" fill="none"/><circle cx="23" cy="21.4" r="5.9" fill="#c3c4c6"/><path d="M23 18.6v5.6M20.2 21.4h5.6" stroke="#fff" stroke-width="1.5"/></svg>
<div class="t" style="left:891.11px;top:647.00px;font-size:12.5px;color:#4a4c50;font-weight:normal;transform:scaleX(0.9300);transform-origin:0 0;">Oct 8</div>
<div class="a" style="left:959px;top:632px;width:160px;height:38px;background:#9b59b6"></div>
<div class="t" style="left:1000.90px;top:645.00px;font-size:14px;color:#fff;font-weight:normal;transform:scaleX(0.9800);transform-origin:0 0;">All Platforms</div>
<svg style="left:1163.4px;top:642.5px" width="19" height="19" viewBox="0 0 19 19"><path d="M8.5 16.9H2.6A1.6 1.6 0 0 1 1 15.3V2.4A1.6 1.6 0 0 1 2.6 0.8h7.6l4.5 4.5v6.4" stroke="#c9cdd4" stroke-width="1.1" fill="none" stroke-linejoin="round"/><path d="M10.2 0.8v3.3a1.2 1.2 0 0 0 1.2 1.2h3.3" stroke="#c9cdd4" stroke-width="1.1" fill="none"/><path d="M3.8 7.4h2.6M3.8 9.9h6.6M3.8 12.4h7" stroke="#c9cdd4" stroke-width="1"/><circle cx="13.9" cy="15.1" r="3.5" stroke="#c9cdd4" stroke-width="1" fill="#fff"/><path d="M13.9 13.6v3M12.4 15.1h3" stroke="#c9cdd4" stroke-width="1"/></svg>
<svg style="left:1230px;top:641.0px" width="26" height="22" viewBox="0 0 26 22"><path d="M8.4 9.3L10.8 6.9L13.2 9.3" stroke="#45c56f" stroke-width="2.1" fill="none" stroke-linecap="round" stroke-linejoin="round"/><circle cx="6.3" cy="11.5" r="1.25" fill="#5fce85"/><circle cx="8.6" cy="13.7" r="1.25" fill="#5fce85"/><circle cx="10.8" cy="15.9" r="1.25" fill="#5fce85"/><circle cx="15.1" cy="11.5" r="1.25" fill="#5fce85"/><circle cx="15.2" cy="6.9" r="1.1" fill="#b0b6c4"/><circle cx="17.4" cy="9.2" r="1.1" fill="#b0b6c4"/><circle cx="19.8" cy="11.5" r="1.1" fill="#a3aab8"/><circle cx="10.8" cy="11.4" r="1.1" fill="#b0b6c4"/><path d="M13 14L15.2 16.1L17.4 14" stroke="#5a6580" stroke-width="2" fill="none" stroke-linecap="round" stroke-linejoin="round"/></svg>
<div class="t" style="left:1254.80px;top:647.00px;font-size:12.7px;color:#505257;font-weight:normal;transform:scaleX(0.9193);transform-origin:0 0;">www.company.com</div>
<div class="a" style="left:12px;top:672px;width:1370px;height:41px;background:linear-gradient(180deg,#fff 0,#fff 78%,#f7f7f7 100%)"></div>
<div class="a" style="left:33px;top:688.5px;width:9px;height:9px;border-radius:2px;background:#d4d4d5"></div>
<div class="t" style="left:57.00px;top:685.00px;font-size:15px;color:#4a4c50;font-weight:normal;transform:scaleX(0.9620);transform-origin:0 0;">Create a new pin for this month's new product</div>
<svg style="left:783px;top:677.5px" width="31" height="31" viewBox="0 0 31 31"><circle cx="15.4" cy="14.2" r="13.6" stroke="#c9cbcf" stroke-width="1.05" stroke-dasharray="1.7 2.6" fill="none"/><circle cx="15.3" cy="10.2" r="3.4" stroke="#b9bcc1" stroke-width="1" fill="none"/><path d="M9.3 21.8a6.2 6.2 0 0 1 9.8-5.4" stroke="#b9bcc1" stroke-width="1" fill="none"/><circle cx="23" cy="21.4" r="5.9" fill="#c3c4c6"/><path d="M23 18.6v5.6M20.2 21.4h5.6" stroke="#fff" stroke-width="1.5"/></svg>
<div class="t" style="left:876.56px;top:687.00px;font-size:12.5px;color:#f04a50;font-weight:normal;transform:scaleX(0.9300);transform-origin:0 0;">5 days ago</div>
<div class="a" style="left:959px;top:672px;width:160px;height:39px;background:#ff7800"></div>
<div class="t" style="left:1012.40px;top:686.00px;font-size:14px;color:#fff;font-weight:normal;transform:scaleX(0.9774);transform-origin:0 0;">Pinterest</div>
<svg style="left:1163.4px;top:683.0px" width="19" height="19" viewBox="0 0 19 19"><path d="M8.5 16.9H2.6A1.6 1.6 0 0 1 1 15.3V2.4A1.6 1.6 0 0 1 2.6 0.8h7.6l4.5 4.5v6.4" stroke="#c9cdd4" stroke-width="1.1" fill="none" stroke-linejoin="round"/><path d="M10.2 0.8v3.3a1.2 1.2 0 0 0 1.2 1.2h3.3" stroke="#c9cdd4" stroke-width="1.1" fill="none"/><path d="M3.8 7.4h2.6M3.8 9.9h6.6M3.8 12.4h7" stroke="#c9cdd4" stroke-width="1"/><circle cx="13.9" cy="15.1" r="3.5" stroke="#c9cdd4" stroke-width="1" fill="#fff"/><path d="M13.9 13.6v3M12.4 15.1h3" stroke="#c9cdd4" stroke-width="1"/></svg>
<div class="t" style="left:1334.66px;top:687.00px;font-size:12px;color:#4a4c50;font-weight:normal;transform:scaleX(1.0000);transform-origin:0 0;">–</div>
<div class="a" style="left:12px;top:713px;width:1370px;height:41px;background:linear-gradient(180deg,#fff 0,#fff 78%,#f7f7f7 100%)"></div>
<div class="a" style="left:33px;top:729.0px;width:9px;height:9px;border-radius:2px;background:#d4d4d5"></div>
<div class="t" style="left:57.00px;top:726.00px;font-size:15px;color:#4a4c50;font-weight:normal;transform:scaleX(0.9569);transform-origin:0 0;">Upload company products in an Album on Facebook</div>
<svg style="left:783px;top:718.0px" width="31" height="31" viewBox="0 0 31 31"><circle cx="15.4" cy="14.2" r="13.6" stroke="#c9cbcf" stroke-width="1.05" stroke-dasharray="1.7 2.6" fill="none"/><circle cx="15.3" cy="10.2" r="3.4" stroke="#b9bcc1" stroke-width="1" fill="none"/><path d="M9.3 21.8a6.2 6.2 0 0 1 9.8-5.4" stroke="#b9bcc1" stroke-width="1" fill="none"/><circle cx="23" cy="21.4" r="5.9" fill="#c3c4c6"/><path d="M23 18.6v5.6M20.2 21.4h5.6" stroke="#fff" stroke-width="1.5"/></svg>
<div class="t" style="left:887.88px;top:728.00px;font-size:12.5px;color:#4a4c50;font-weight:normal;transform:scaleX(0.9300);transform-origin:0 0;">Oct 27</div>
<div class="a" style="left:959px;top:713px;width:160px;height:39px;background:#f9d900"></div>
<div class="t" style="left:1010.40px;top:726.00px;font-size:14px;color:#5e5930;font-weight:normal;transform:scaleX(0.9434);transform-origin:0 0;">Facebook</div>
<svg style="left:1163.4px;top:723.5px" width="19" height="19" viewBox="0 0 19 19"><path d="M8.5 16.9H2.6A1.6 1.6 0 0 1 1 15.3V2.4A1.6 1.6 0 0 1 2.6 0.8h7.6l4.5 4.5v6.4" stroke="#c9cdd4" stroke-width="1.1" fill="none" stroke-linejoin="round"/><path d="M10.2 0.8v3.3a1.2 1.2 0 0 0 1.2 1.2h3.3" stroke="#c9cdd4" stroke-width="1.1" fill="none"/><path d="M3.8 7.4h2.6M3.8 9.9h6.6M3.8 12.4h7" stroke="#c9cdd4" stroke-width="1"/><circle cx="13.9" cy="15.1" r="3.5" stroke="#c9cdd4" stroke-width="1" fill="#fff"/><path d="M13.9 13.6v3M12.4 15.1h3" stroke="#c9cdd4" stroke-width="1"/></svg>
<svg style="left:1230px;top:722.0px" width="26" height="22" viewBox="0 0 26 22"><path d="M8.4 9.3L10.8 6.9L13.2 9.3" stroke="#45c56f" stroke-width="2.1" fill="none" stroke-linecap="round" stroke-linejoin="round"/><circle cx="6.3" cy="11.5" r="1.25" fill="#5fce85"/><circle cx="8.6" cy="13.7" r="1.25" fill="#5fce85"/><circle cx="10.8" cy="15.9" r="1.25" fill="#5fce85"/><circle cx="15.1" cy="11.5" r="1.25" fill="#5fce85"/><circle cx="15.2" cy="6.9" r="1.1" fill="#b0b6c4"/><circle cx="17.4" cy="9.2" r="1.1" fill="#b0b6c4"/><circle cx="19.8" cy="11.5" r="1.1" fill="#a3aab8"/><circle cx="10.8" cy="11.4" r="1.1" fill="#b0b6c4"/><path d="M13 14L15.2 16.1L17.4 14" stroke="#5a6580" stroke-width="2" fill="none" stroke-linecap="round" stroke-linejoin="round"/></svg>
<div class="t" style="left:1254.80px;top:728.00px;font-size:12.7px;color:#505257;font-weight:normal;transform:scaleX(0.9193);transform-origin:0 0;">www.company.com</div></body></html>
